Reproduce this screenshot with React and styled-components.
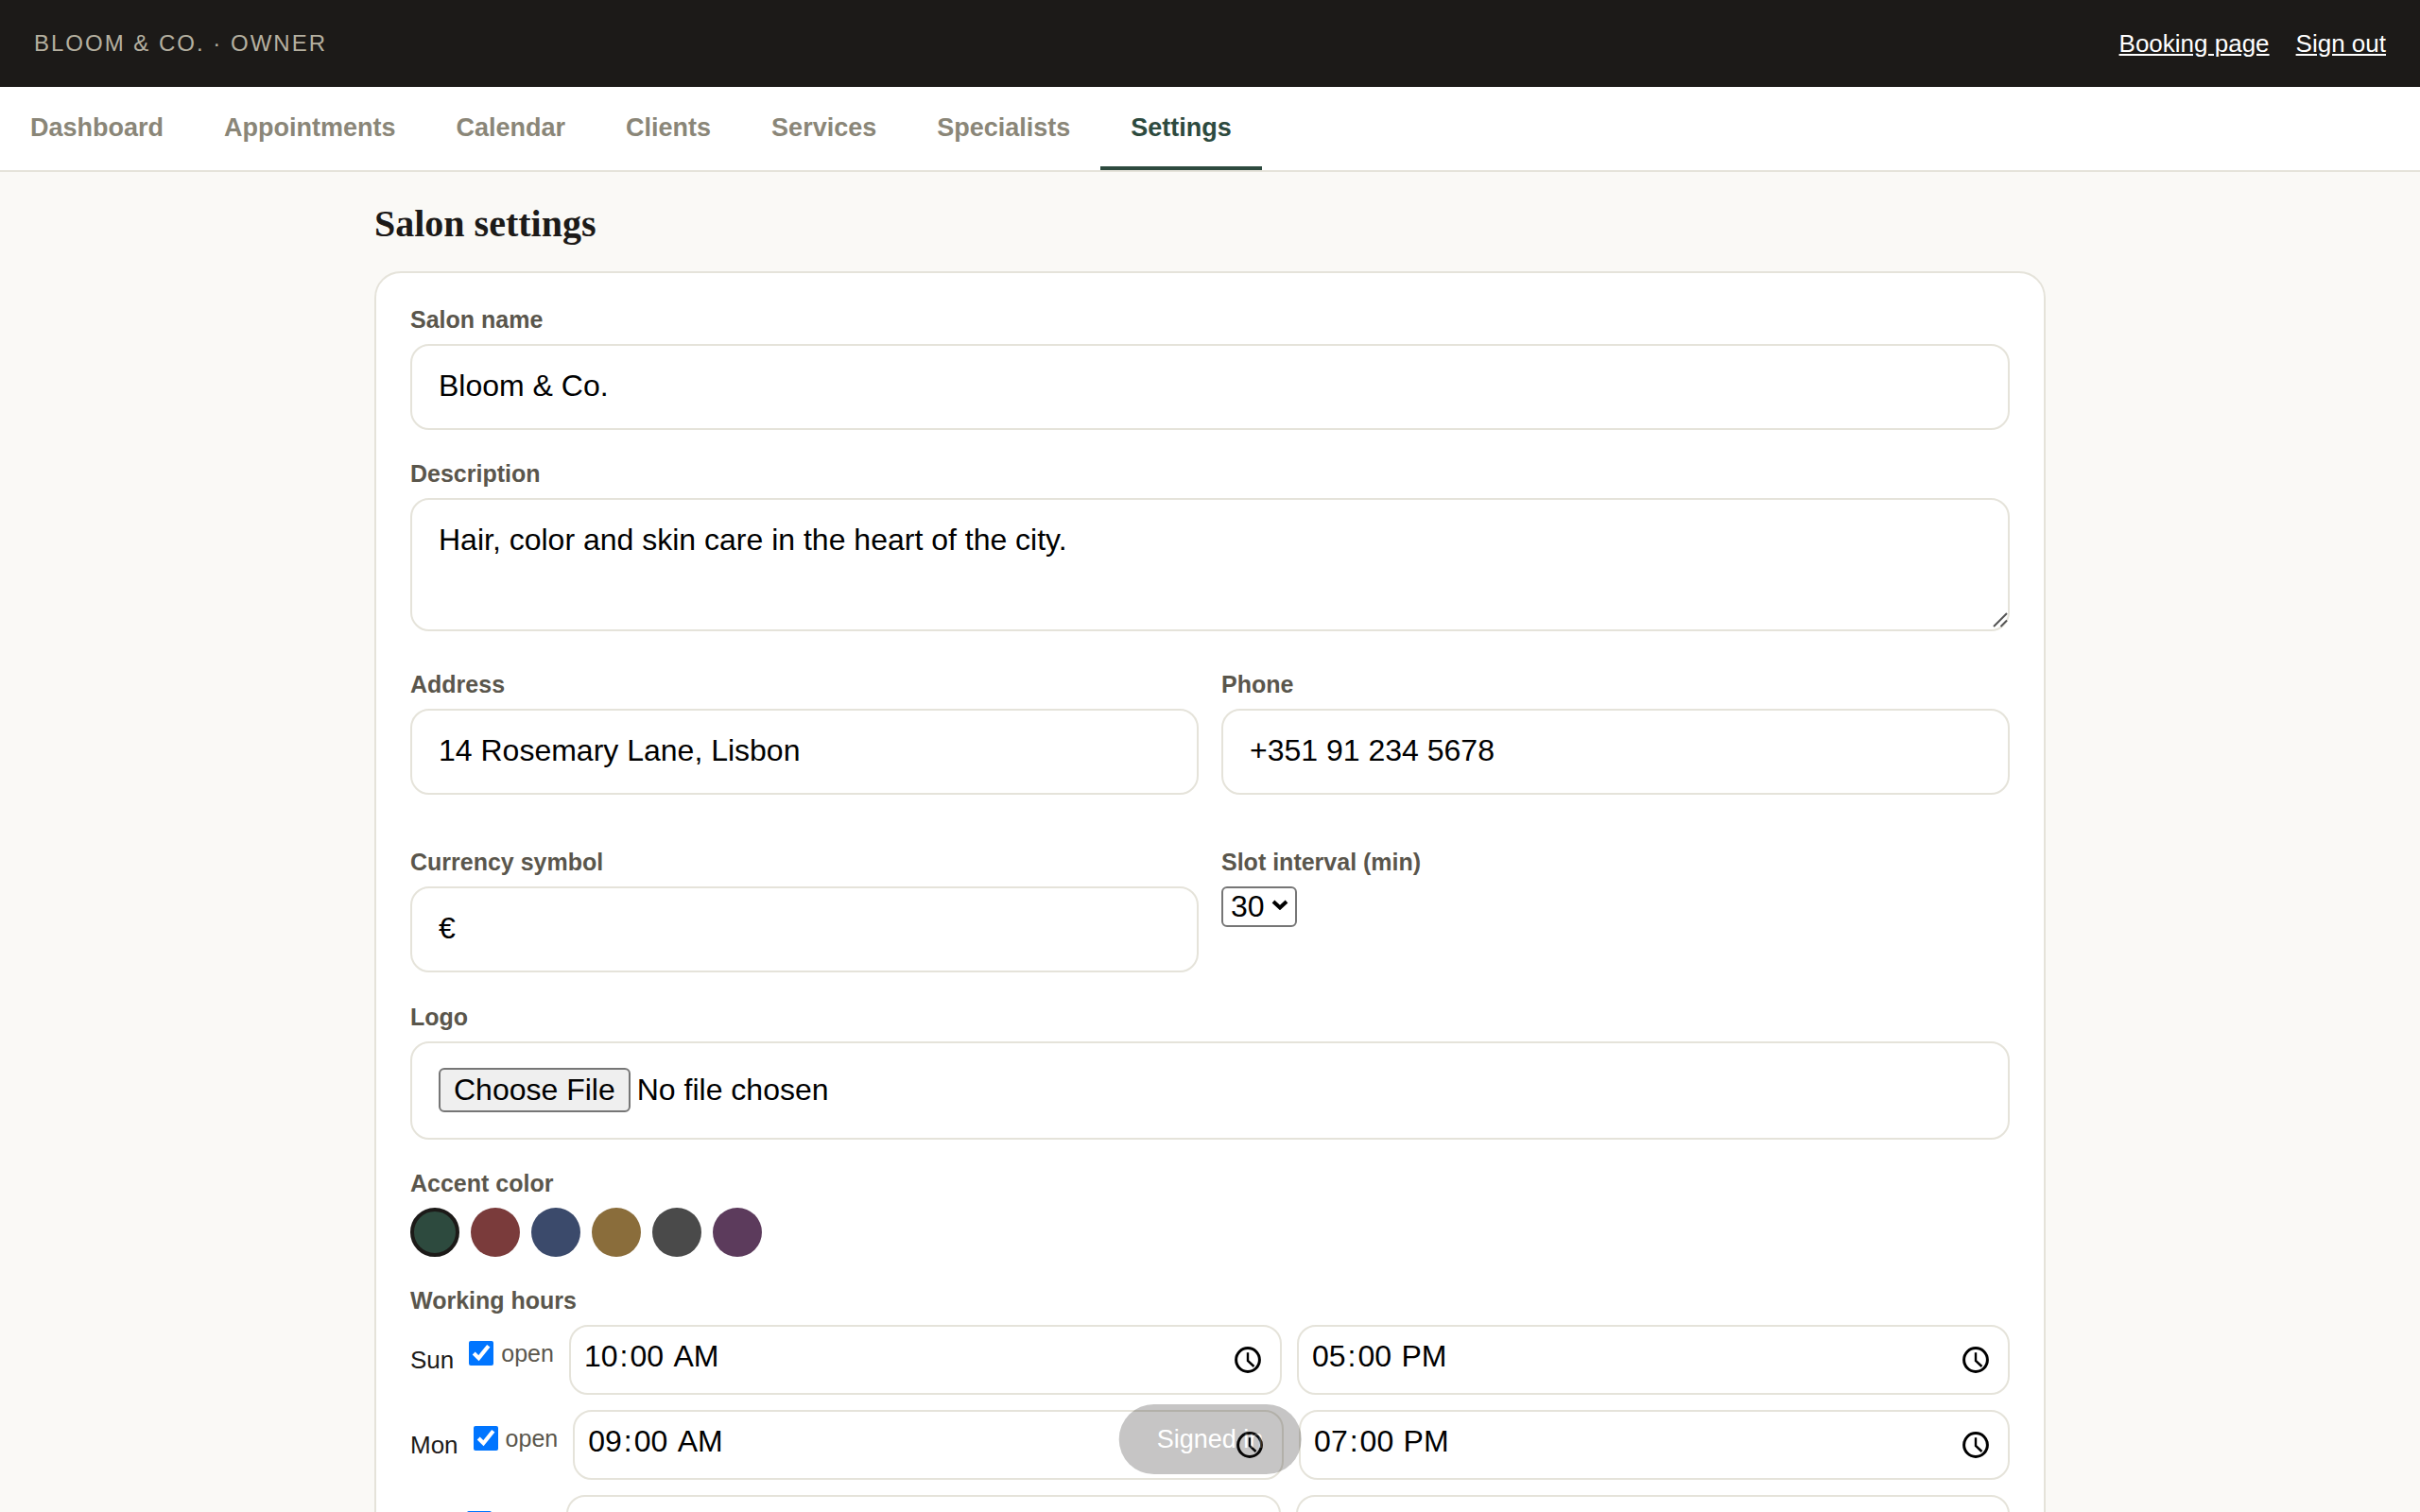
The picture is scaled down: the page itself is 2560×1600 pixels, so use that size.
import React from "react";
import styled, { createGlobalStyle } from "styled-components";

const GlobalStyle = createGlobalStyle`
  html, body {
    margin: 0;
    height: 100%;
    overflow: hidden;
    background: #faf9f6;
    font-family: "Liberation Sans", Arial, sans-serif;
    color: #1c1a18;
  }
  * { box-sizing: border-box; }
`;

const COLOR = {
  ink: "#1c1a18",
  muted: "#8a8678",
  label: "#5a564c",
  line: "#e5e3da",
  green: "#2d4a3e",
};

const TABS = ["Dashboard", "Appointments", "Calendar", "Clients", "Services", "Specialists", "Settings"];
const SWATCHES = ["#2d4a3e", "#7a3b3b", "#3b4a6b", "#8a6d3b", "#4a4a4a", "#5c3b5c"];
const HOURS = [
  { day: "Sun", from: "10:00", to: "17:00" },
  { day: "Mon", from: "09:00", to: "19:00" },
  { day: "Tue", from: "09:00", to: "19:00" },
];

const ClockIcon = () => (
  <svg width="28" height="28" viewBox="0 0 28 28" fill="none" stroke="#000" strokeWidth="3">
    <circle cx="14" cy="14" r="12.4" />
    <path d="M14 6.3V15L20.5 21" strokeWidth="2.4" />
  </svg>
);

const App = () => (
  <Page>
    <GlobalStyle />
    <TopBar>
      <Brand>BLOOM &amp; CO. · OWNER</Brand>
      <TopLinks>
        <TopLink href="#">Booking page</TopLink>
        <TopLink href="#">Sign out</TopLink>
      </TopLinks>
    </TopBar>
    <TabBar>
      {TABS.map((tab) => (
        <Tab key={tab} $active={tab === "Settings"}>
          {tab}
        </Tab>
      ))}
    </TabBar>
    <Main>
      <Title>Salon settings</Title>
      <Card>
        <Field>
          <Label>Salon name</Label>
          <TextInput defaultValue="Bloom & Co." />
        </Field>
        <TextAreaField>
          <Label>Description</Label>
          <TextAreaWrap>
            <TextArea defaultValue="Hair, color and skin care in the heart of the city." />
            <Grip width="16" height="16" viewBox="0 0 16 16">
              <path d="M1 15L15 1M8.5 15L15 8.5" fill="none" stroke="#555" strokeWidth="2" />
            </Grip>
          </TextAreaWrap>
        </TextAreaField>
        <TwoCols>
          <Field>
            <Label>Address</Label>
            <TextInput defaultValue="14 Rosemary Lane, Lisbon" />
          </Field>
          <Field>
            <Label>Phone</Label>
            <TextInput defaultValue="+351 91 234 5678" />
          </Field>
        </TwoCols>
        <TwoCols>
          <Field>
            <Label>Currency symbol</Label>
            <TextInput defaultValue="€" />
          </Field>
          <Field>
            <Label>Slot interval (min)</Label>
            <SelectWrap>
              <Select defaultValue="30">
                <option>15</option>
                <option>30</option>
                <option>60</option>
              </Select>
              <Chevron width="18" height="12" viewBox="0 0 18 12">
                <path d="M2 3l7 6.5 7-6.5" fill="none" stroke="#000" strokeWidth="4" />
              </Chevron>
            </SelectWrap>
          </Field>
        </TwoCols>
        <Field>
          <Label>Logo</Label>
          <FileInput type="file" />
        </Field>
        <Field>
          <Label>Accent color</Label>
          <Swatches>
            {SWATCHES.map((c, i) => (
              <Swatch key={c} $color={c} $selected={i === 0} />
            ))}
          </Swatches>
        </Field>
        <Label>Working hours</Label>
        <Hours>
          {HOURS.map((row) => (
            <HoursRow key={row.day}>
              <Day>{row.day}</Day>
              <OpenLabel>
                <OpenCheck type="checkbox" defaultChecked />
                open
              </OpenLabel>
              <TimeWrap>
                <TimeInput type="time" defaultValue={row.from} />
                <ClockSlot>
                  <ClockIcon />
                </ClockSlot>
              </TimeWrap>
              <TimeWrap>
                <TimeInput type="time" defaultValue={row.to} />
                <ClockSlot>
                  <ClockIcon />
                </ClockSlot>
              </TimeWrap>
            </HoursRow>
          ))}
        </Hours>
      </Card>
    </Main>
    <Toast>Signed in</Toast>
  </Page>
);

const Page = styled.div`
  min-height: 100vh;
`;

const TopBar = styled.header`
  height: 92px;
  background: ${COLOR.ink};
  display: flex;
  align-items: center;
  justify-content: space-between;
  padding: 0 36px;
`;

const Brand = styled.div`
  font-size: 24px;
  letter-spacing: 2px;
  color: #b5b0a0;
`;

const TopLinks = styled.nav`
  display: flex;
  gap: 28px;
`;

const TopLink = styled.a`
  font-size: 26px;
  color: #fff;
`;

const TabBar = styled.nav`
  height: 90px;
  background: #fff;
  border-bottom: 2px solid ${COLOR.line};
  display: flex;
`;

const Tab = styled.div`
  height: 88px;
  padding: 3px 32px 0;
  display: flex;
  align-items: center;
  font-size: 27px;
  font-weight: 700;
  color: ${(p) => (p.$active ? COLOR.green : COLOR.muted)};
  border-bottom: 4px solid ${(p) => (p.$active ? COLOR.green : "transparent")};
`;

const Main = styled.main`
  width: 1768px;
  margin: 0 auto;
  padding-top: 32px;
`;

const Title = styled.h1`
  margin: 0 0 27px;
  font-family: "Liberation Serif", "Times New Roman", serif;
  font-size: 40px;
  line-height: 46px;
  font-weight: 700;
  color: ${COLOR.ink};
`;

const Card = styled.section`
  background: #fff;
  border: 2px solid ${COLOR.line};
  border-radius: 28px;
  padding: 36px;
`;

const Field = styled.div`
  margin-bottom: 33px;
`;

const TextAreaField = styled.div`
  margin-bottom: 43px;
`;

const Label = styled.label`
  display: block;
  font-size: 25px;
  line-height: 27px;
  font-weight: 700;
  color: ${COLOR.label};
  margin-bottom: 12px;
`;

const TextInput = styled.input`
  display: block;
  width: 100%;
  height: 91px;
  padding: 0 28px 2px;
  border: 2px solid ${COLOR.line};
  border-radius: 20px;
  background: #fff;
  font: 32px "Liberation Sans", Arial, sans-serif;
  color: #000;
`;

const TextAreaWrap = styled.div`
  position: relative;
`;

const TextArea = styled.textarea`
  display: block;
  width: 100%;
  height: 141px;
  padding: 24px 28px;
  border: 2px solid ${COLOR.line};
  border-radius: 20px;
  background: #fff;
  font: 32px "Liberation Sans", Arial, sans-serif;
  color: #000;
  resize: none;
`;

const Grip = styled.svg`
  position: absolute;
  right: 2px;
  bottom: 4px;
  pointer-events: none;
`;

const TwoCols = styled.div`
  display: grid;
  grid-template-columns: 1fr 1fr;
  gap: 24px;

  & + & {
    margin-top: 25px;
    margin-bottom: 1px;
  }
`;

const SelectWrap = styled.div`
  position: relative;
  width: 80px;
  height: 43px;
`;

const Select = styled.select`
  appearance: none;
  display: block;
  width: 80px;
  height: 43px;
  padding: 0 0 2px 8px;
  border: 2px solid #767676;
  border-radius: 6px;
  background: #fff;
  font: 32px "Liberation Sans", Arial, sans-serif;
  color: #000;
`;

const Chevron = styled.svg`
  position: absolute;
  right: 9px;
  top: 13px;
  pointer-events: none;
`;

const FileInput = styled.input`
  display: block;
  width: 100%;
  height: 104px;
  padding: 26px 28px;
  border: 2px solid ${COLOR.line};
  border-radius: 20px;
  background: #fff;
  font: 32px "Liberation Sans", Arial, sans-serif;
  color: #000;

  &::file-selector-button {
    height: 47px;
    margin-right: 7px;
    padding: 0 14px;
    border: 2px solid #767676;
    border-radius: 6px;
    background: #efefef;
    font: 32px "Liberation Sans", Arial, sans-serif;
    color: #000;
  }
`;

const Swatches = styled.div`
  display: flex;
  gap: 12px;
`;

const Swatch = styled.div`
  width: 52px;
  height: 52px;
  border-radius: 50%;
  background: ${(p) => p.$color};
  border: ${(p) => (p.$selected ? `4px solid ${COLOR.ink}` : "none")};
`;

const Hours = styled.div`
  display: flex;
  flex-direction: column;
  gap: 16px;
`;

const HoursRow = styled.div`
  display: flex;
  align-items: center;
  gap: 16px;
`;

const Day = styled.span`
  font-size: 26px;
  color: ${COLOR.ink};
`;

const OpenLabel = styled.label`
  display: flex;
  align-items: center;
  gap: 8px;
  font-size: 25px;
  color: ${COLOR.label};
  margin-bottom: 14px;
`;

const OpenCheck = styled.input`
  width: 26px;
  height: 26px;
  margin: 0;
`;

const TimeWrap = styled.div`
  position: relative;
  flex: 1;
`;

const TimeInput = styled.input`
  display: block;
  width: 100%;
  height: 74px;
  padding: 0 12px 8px;
  border: 2px solid ${COLOR.line};
  border-radius: 20px;
  background: #fff;
  font: 32px "Liberation Sans", Arial, sans-serif;
  color: #000;

  &::-webkit-datetime-edit-hour-field,
  &::-webkit-datetime-edit-minute-field,
  &::-webkit-datetime-edit-ampm-field {
    padding: 0 2px;
  }

  &::-webkit-calendar-picker-indicator {
    opacity: 0;
  }
`;

const ClockSlot = styled.span`
  position: absolute;
  right: 22px;
  top: 23px;
  display: flex;
  pointer-events: none;
`;

const Toast = styled.div`
  position: fixed;
  left: 50%;
  bottom: 40px;
  transform: translateX(-50%);
  height: 74px;
  padding: 0 40px;
  display: flex;
  align-items: center;
  border-radius: 37px;
  background: ${COLOR.ink};
  color: #fff;
  font-size: 27px;
  white-space: nowrap;
  opacity: 0.25;
`;

export default App;
